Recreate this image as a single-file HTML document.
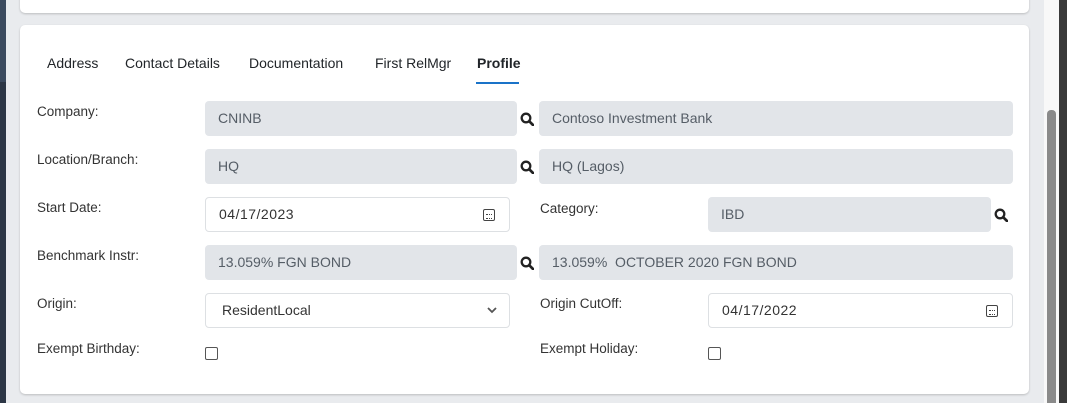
<!DOCTYPE html>
<html><head><style>
*{box-sizing:border-box;margin:0;padding:0}
html,body{width:1067px;height:403px;overflow:hidden}
body{background:#e9ebee;font-family:"Liberation Sans",sans-serif;font-size:14px;color:#212529;position:relative}
.a{position:absolute}
.card{background:#fff;border-radius:5px;box-shadow:0 1px 2px rgba(0,0,0,.2)}
.tab{position:absolute;top:55px;font-size:14px;color:#212529}
.lbl{position:absolute;font-size:13.5px;color:#333}
.in{position:absolute;height:35px;border-radius:4px;padding-left:13px;line-height:35px;font-size:14px}
.ro{background:#e2e5e9;color:#555d66}
.wh{background:#fff;border:1px solid #dde0e3;color:#333;line-height:33px}
.dt{letter-spacing:0.5px}
.cb{position:absolute;width:13px;height:13px;border:1px solid #555;border-radius:2px;background:#fff}
.cal{position:absolute;right:14px;top:11px;width:12px;height:12px;border:1.5px solid #444;border-radius:2px}
.cal:after{content:"";position:absolute;left:2px;top:4px;width:6px;height:3px;border-top:1px dotted #444;border-bottom:1px dotted #444}
</style></head><body>
<div class="a" style="left:0;top:0;width:6px;height:82px;background:#3b4a5e"></div>
<div class="a" style="left:0;top:82px;width:6px;height:321px;background:#2c3645"></div>
<div class="a" style="left:1044px;top:0;width:15px;height:403px;background:#f8f8f8"></div>
<div class="a" style="left:1047px;top:110px;width:9px;height:300px;background:#8a8a8a;border-radius:4px"></div>
<div class="a" style="left:1059px;top:0;width:8px;height:403px;background:#3a3a3a"></div>
<div class="a card" style="left:20px;top:-10px;width:1009px;height:23px"></div>
<div class="a card" style="left:20px;top:25px;width:1009px;height:369px"></div>

<div class="tab" style="left:47px">Address</div>
<div class="tab" style="left:125px">Contact Details</div>
<div class="tab" style="left:249px">Documentation</div>
<div class="tab" style="left:375px">First RelMgr</div>
<div class="tab" style="left:477px;font-weight:bold">Profile</div>
<div class="a" style="left:476px;top:82px;width:43px;height:2px;background:#1a73c8"></div>

<svg width="0" height="0" style="position:absolute"><defs><g id="q"><circle cx="6" cy="6" r="4.3" fill="none" stroke="#222" stroke-width="2.3"/><path d="M9.3 9.3L13 13" stroke="#222" stroke-width="2.7" stroke-linecap="round"/></g></defs></svg>

<div class="lbl" style="left:37px;top:104px">Company:</div>
<div class="in ro" style="left:205px;top:101px;width:312px">CNINB</div>
<svg class="a" style="left:520px;top:112px" width="14" height="14"><use href="#q"/></svg>
<div class="in ro" style="left:539px;top:101px;width:474px">Contoso Investment Bank</div>

<div class="lbl" style="left:37px;top:152px">Location/Branch:</div>
<div class="in ro" style="left:205px;top:149px;width:312px">HQ</div>
<svg class="a" style="left:520px;top:160px" width="14" height="14"><use href="#q"/></svg>
<div class="in ro" style="left:539px;top:149px;width:474px">HQ (Lagos)</div>

<div class="lbl" style="left:37px;top:200px">Start Date:</div>
<div class="in wh dt" style="left:205px;top:197px;width:305px">04/17/2023<span class="cal"></span></div>
<div class="lbl" style="left:540px;top:201px">Category:</div>
<div class="in ro" style="left:708px;top:197px;width:283px">IBD</div>
<svg class="a" style="left:994px;top:208px" width="14" height="14"><use href="#q"/></svg>

<div class="lbl" style="left:37px;top:248px">Benchmark Instr:</div>
<div class="in ro" style="left:205px;top:245px;width:312px">13.059% FGN BOND</div>
<svg class="a" style="left:520px;top:256px" width="14" height="14"><use href="#q"/></svg>
<div class="in ro" style="left:539px;top:245px;width:474px">13.059%&nbsp; OCTOBER 2020 FGN BOND</div>

<div class="lbl" style="left:37px;top:296px">Origin:</div>
<div class="in wh" style="left:205px;top:293px;width:305px;padding-left:16px">ResidentLocal
<svg class="a" style="right:12px;top:13px" width="10" height="7"><path d="M1 1L5 5L9 1" fill="none" stroke="#555" stroke-width="1.8"/></svg></div>
<div class="lbl" style="left:540px;top:296px">Origin CutOff:</div>
<div class="in wh dt" style="left:708px;top:293px;width:305px">04/17/2022<span class="cal"></span></div>

<div class="lbl" style="left:37px;top:341px">Exempt Birthday:</div>
<div class="cb" style="left:205px;top:347px"></div>
<div class="lbl" style="left:540px;top:341px">Exempt Holiday:</div>
<div class="cb" style="left:708px;top:347px"></div>
</body></html>
